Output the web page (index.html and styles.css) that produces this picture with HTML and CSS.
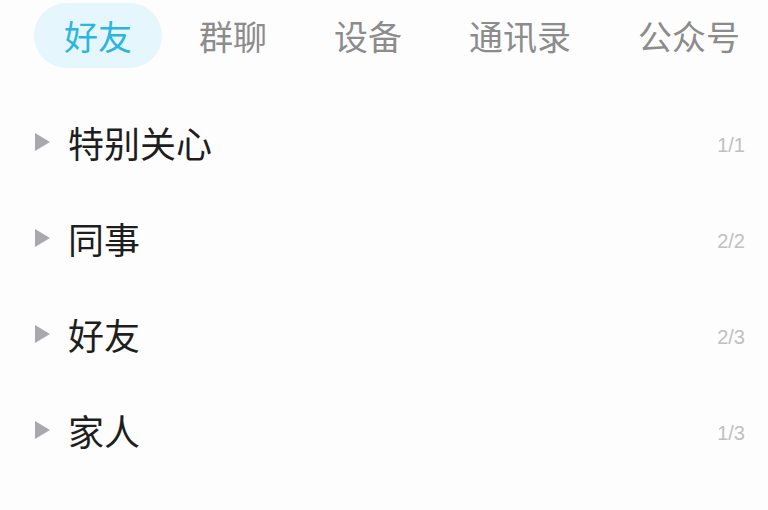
FILE: index.html
```html
<!DOCTYPE html>
<html lang="zh-CN">
<head>
<meta charset="utf-8">
<title>联系人</title>
<link rel="stylesheet" href="styles.css">
</head>
<body>
<div class="app">
  <nav class="tabs">
    <div class="tab active">好友</div>
    <div class="tab">群聊</div>
    <div class="tab">设备</div>
    <div class="tab">通讯录</div>
    <div class="tab">公众号</div>
  </nav>
  <ul class="groups">
    <li class="group"><span class="arrow"></span><span class="name">特别关心</span><span class="count">1/1</span></li>
    <li class="group"><span class="arrow"></span><span class="name">同事</span><span class="count">2/2</span></li>
    <li class="group"><span class="arrow"></span><span class="name">好友</span><span class="count">2/3</span></li>
    <li class="group"><span class="arrow"></span><span class="name">家人</span><span class="count">1/3</span></li>
    <li class="group"><span class="arrow"></span><span class="name">陌生人</span><span class="count">0/2</span></li>
  </ul>
</div>
</body>
</html>
```
FILE: styles.css
```css
html, body {
  margin: 0;
  padding: 0;
  background: #fdfdfd;
  overflow: hidden;
}
body {
  font-family: "Noto Sans CJK SC", "Noto Sans", sans-serif;
  width: 768px;
  height: 510px;
}
.app {
  display: flex;
  flex-direction: column;
}
.tabs {
  display: flex;
  align-items: center;
  gap: 7px;
  padding: 3px 0 0 34px;
  height: 65px;
}
.tab {
  height: 65px;
  padding: 0 30px;
  display: flex;
  align-items: center;
  font-size: 34px;
  color: #8c8c8c;
  border-radius: 33px;
  white-space: nowrap;
}
.tab.active {
  background: #e5f7fd;
  color: #2cb5e0;
}
.groups {
  list-style: none;
  margin: 26px 0 0;
  padding: 0;
}
.group {
  height: 96px;
  display: flex;
  align-items: center;
  padding: 0 23px 0 35px;
}
.arrow {
  width: 0;
  height: 0;
  border-top: 9px solid transparent;
  border-bottom: 9px solid transparent;
  border-left: 15px solid #a9a9ad;
  margin-right: 18px;
}
.name {
  flex: 1;
  font-size: 36px;
  color: #1e1e1e;
  line-height: 1;
}
.count {
  font-family: "Liberation Sans", Arial, sans-serif;
  font-size: 20px;
  color: #c0c0c0;
  margin-top: 6px;
}
```
